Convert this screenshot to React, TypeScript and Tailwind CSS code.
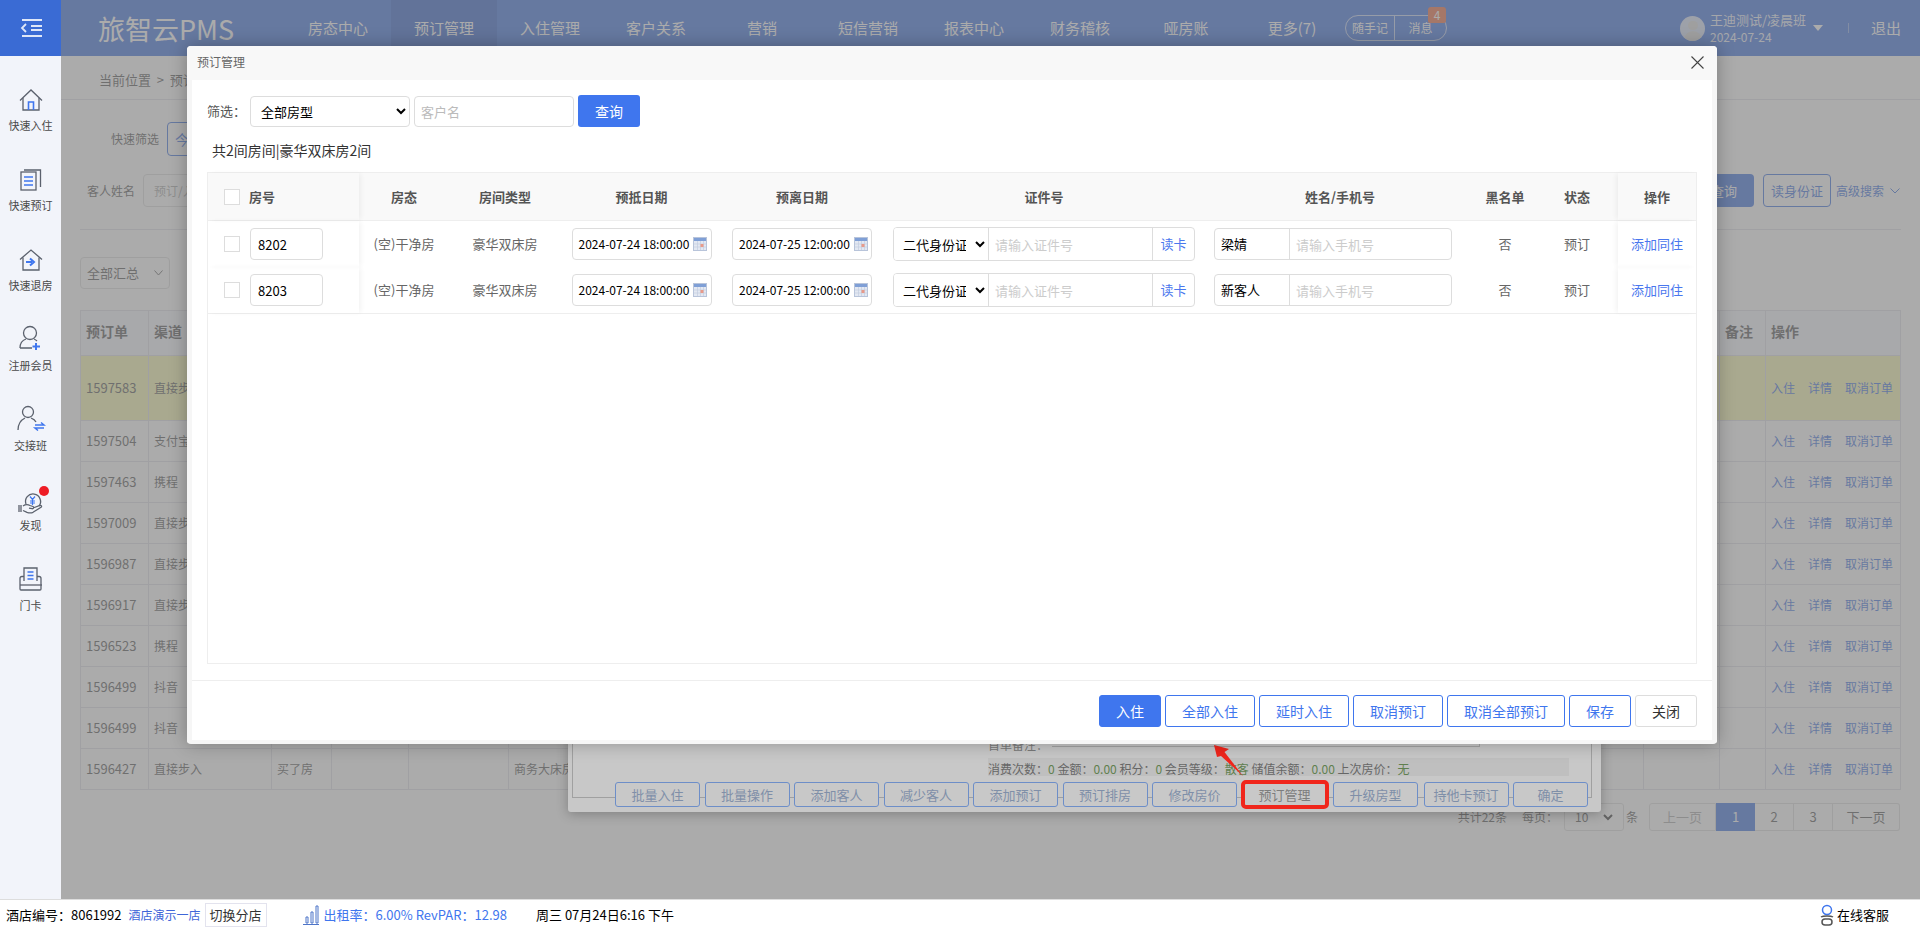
import React from 'react'

const roomCols = 'grid grid-cols-[151px_90px_112px_161px_160px_324px_268px_62px_82px_78px]'

const navItems = ['房态中心', '预订管理', '入住管理', '客户关系', '营销', '短信营销', '报表中心', '财务稽核', '哑房账', '更多(7)']

const orders = [
  { id: '1597583', channel: '直接步入', tall: true },
  { id: '1597504', channel: '支付宝' },
  { id: '1597463', channel: '携程' },
  { id: '1597009', channel: '直接步入' },
  { id: '1596987', channel: '直接步入' },
  { id: '1596917', channel: '直接步入' },
  { id: '1596523', channel: '携程' },
  { id: '1596499', channel: '抖音' },
  { id: '1596499', channel: '抖音' },
  { id: '1596427', channel: '直接步入', guest: '买了房', room: '商务大床房' },
]

const rooms = [
  { no: '8202', guest: '梁婧' },
  { no: '8203', guest: '新客人' },
]

const backButtons = ['批量入住', '批量操作', '添加客人', '减少客人', '添加预订', '预订排房', '修改房价']

const footerButtons = ['全部入住', '延时入住', '取消预订', '取消全部预订', '保存']

const backBtn = 'relative border border-[#6d8ec8] rounded-[3px] bg-[#c8c8c8] text-[#7f8fa8] text-[13px] flex items-center justify-center'

function HomeIcon() {
  return (
    <svg width="24" height="22" viewBox="0 0 24 22" fill="none" stroke="#5b616d" strokeWidth="1.3">
      <path d="M1 11.5 12 1l11 10.5" />
      <path d="M4 9v12h16V9" />
      <path d="M9.5 21v-8h5v8" stroke="#3f76ee" strokeWidth="1.6" />
    </svg>
  )
}

function BookIcon() {
  return (
    <svg width="22" height="22" viewBox="0 0 22 22" fill="none" stroke="#5b616d" strokeWidth="1.3">
      <rect x="1" y="3" width="15" height="18" />
      <path d="M4 1h16.5v17" />
      <path d="M4 8h9M4 12h9M4 16h9" stroke="#3f76ee" strokeWidth="1.6" />
    </svg>
  )
}

function CheckoutIcon() {
  return (
    <svg width="24" height="22" viewBox="0 0 24 22" fill="none" stroke="#5b616d" strokeWidth="1.3">
      <path d="M1 10.5 12 1l11 9.500" />
      <path d="M4 8.500V21h16V8.500" />
      <path d="M7 13h6M11 9.500l4 3.500-4 3.500" stroke="#3f76ee" strokeWidth="2" />
    </svg>
  )
}

function MemberIcon() {
  return (
    <svg width="24" height="26" viewBox="0 0 24 26" fill="none" stroke="#5b616d" strokeWidth="1.3">
      <circle cx="11" cy="8" r="6.500" />
      <path d="M1 23c0-5 3-8 6-9M15 14c1 .4 2 1 3 2M1 23h12" />
      <path d="M17 18v7M13.500 21.500h7.500" stroke="#3f76ee" strokeWidth="2" />
    </svg>
  )
}

function ShiftIcon() {
  return (
    <svg width="30" height="26" viewBox="0 0 30 26" fill="none" stroke="#5b616d" strokeWidth="1.3">
      <circle cx="12" cy="7" r="5.500" />
      <path d="M2 25c0-6 3-10 7-12M15 13c2 .8 4 2 5 4" />
      <path d="M19 20h9l-3-2.500M28 23h-9l3 2.500" stroke="#3f76ee" strokeWidth="1.500" />
    </svg>
  )
}

function DiscoverIcon() {
  return (
    <svg width="26" height="24" viewBox="0 0 26 24" fill="none" stroke="#5b616d" strokeWidth="1.300">
      <path d="M8 13a7.500 7.500 0 1 1 13 2" />
      <path d="M5 15c3-2 5-1.500 7-.5l3 1c1.500.8 .5 2.500-1 2.200l-3-.6M15 17l7-2.500c1.500-.3 2 1 1 1.800l-8 5c-2 1-4 .8-6 0l-4-1.800" />
      <path d="M1 14v7M3 14v7" />
      <path d="M12 5.500l2.500 3 2.500-3M14.500 8.500V14M12 10h5M12 12h5" stroke="#3f76ee" strokeWidth="1.200" />
    </svg>
  )
}

function CardIcon() {
  return (
    <svg width="24" height="24" viewBox="0 0 24 24" fill="none" stroke="#5b616d" strokeWidth="1.300">
      <path d="M5 14V1h13v13" />
      <path d="M5 9.500H3c-1.300 0-2 .8-2 2V22c0 .6.500 1 1 1h19c.6 0 1-.4 1-1V11.500c0-1.200-.7-2-2-2h-2" />
      <path d="M1 18h22" />
      <path d="M8.500 5h6M8.500 8.500h6M8.500 12h6" stroke="#3f76ee" strokeWidth="1.500" />
    </svg>
  )
}

function CalendarIcon() {
  return (
    <svg width="14" height="14" viewBox="0 0 14 14" className="shrink-0">
      <rect x="0.500" y="0.500" width="13" height="13" fill="#e3e8f2" stroke="#b8c4da" />
      <rect x="1" y="1" width="12" height="3" fill="#7f9fd6" />
      <path d="M1 7h12M1 10h12M4.500 4v9M7.500 4v9M10.500 4v9" stroke="#c3cde0" strokeWidth="0.700" />
      <rect x="7.500" y="7" width="3" height="3" fill="#e89a8a" />
    </svg>
  )
}

function SideItem({ icon, label, dot }: { icon: React.ReactNode; label: string; dot?: boolean }) {
  return (
    <div className="h-[80px] flex flex-col items-center">
      <div className="relative h-[33px] flex items-end justify-center">
        <div className={dot ? 'translate-y-[4px]' : ''}>{icon}</div>
        {dot && <span className="absolute top-[8px] right-[-5px] w-[10px] h-[10px] rounded-full bg-[#ee1c25]" />}
      </div>
      <span className="mt-[6px] text-[11px] leading-[16px] text-[#4a4a4a]">{label}</span>
    </div>
  )
}

function BackDialog() {
  return (
    <div className="absolute left-[507px] top-[300px] w-[1033px] h-[512px] bg-[#c8c8c8] rounded-b-[3px] shadow-[0_2px_12px_rgba(0,0,0,0.25)] flex flex-col justify-end">
      <div className="absolute left-[4px] right-[9px] top-0 h-[498px] border-x border-b border-[#a0a0a0]" />
      <div className="relative ml-[420px] h-[18px] flex text-[#7a7a7a] text-[12px] mb-[11px]">
        <span className="w-[64px] pt-[7px] leading-[18px] whitespace-nowrap">首单备注：</span>
        <div className="w-[428px] h-[18px] border-b border-r border-[#a5a5a5]" />
      </div>
      <div className="relative ml-[420px] w-[581px] h-[18px] bg-[#bfbfbf] pt-[2px] text-[12px] leading-[18px] text-[#666] whitespace-nowrap">
        消费次数：<span className="text-[#5f7f4f]">0</span> 金额：<span className="text-[#5f7f4f]">0.00</span> 积分：<span className="text-[#5f7f4f]">0</span> 会员等级：<span className="text-[#5f7f4f]">散客</span> 储值余额：<span className="text-[#5f7f4f]">0.00</span> 上次房价：<span className="text-[#5f7f4f]">无</span>
      </div>
      <div className="relative mt-[6px] mb-[5px] pl-[47px] h-[25px] flex gap-[4.500px]">
        {backButtons.map((b) => (
          <div key={b} className={`${backBtn} w-[85px]`}>
            {b}
          </div>
        ))}
        <div className="relative w-[88px] -my-[2px] -ml-[1px] border-[4px] border-[#f0261c] rounded-[5px] bg-[#c8c8c8] text-[#7d7d7d] text-[13px] flex items-center justify-center">预订管理</div>
        <div className={`${backBtn} w-[85px]`}>升级房型</div>
        <div className={`${backBtn} w-[85px] ml-[1px]`}>持他卡预订</div>
        <div className={`${backBtn} w-[75px]`}>确定</div>
      </div>
    </div>
  )
}

function RoomRow({ room }: { room: (typeof rooms)[number] }) {
  return (
    <div className={`${roomCols} h-[46px] items-center text-[13px] text-[#666]`}>
      <div className="h-full flex items-center pl-[16px] gap-[10px] shadow-[3px_0_5px_-1px_rgba(0,0,0,0.05)]">
        <div className="w-[16px] h-[16px] border border-[#ddd] bg-white" />
        <input readOnly value={room.no} className="w-[73px] h-[32px] border border-[#ddd] rounded-[4px] px-[7px] text-[13px] text-black outline-none" />
      </div>
      <div className="text-center">(空)干净房</div>
      <div className="text-center">豪华双床房</div>
      <div className="flex justify-center">
        <div className="w-[140px] h-[32px] border border-[#ddd] rounded-[4px] flex items-center pl-[6px] text-[12px] text-black gap-[4px] whitespace-nowrap">
          2024-07-24 18:00:00
          <CalendarIcon />
        </div>
      </div>
      <div className="flex justify-center">
        <div className="w-[140px] h-[32px] border border-[#ddd] rounded-[4px] flex items-center pl-[6px] text-[12px] text-black gap-[4px] whitespace-nowrap">
          2024-07-25 12:00:00
          <CalendarIcon />
        </div>
      </div>
      <div className="flex justify-center">
        <div className="w-[302px] h-[34px] border border-[#ddd] rounded-[4px] flex items-center overflow-hidden">
          <select className="w-[95px] h-full pl-[5px] pr-[6px] text-[13px] text-black border-r border-[#ddd] bg-white outline-none">
            <option>二代身份证</option>
          </select>
          <input readOnly placeholder="请输入证件号" className="w-[163px] h-full px-[6px] text-[13px] outline-none placeholder:text-[#ccc]" />
          <div className="flex-1 h-full border-l border-[#ddd] flex items-center justify-center text-[#4a77ee]">读卡</div>
        </div>
      </div>
      <div className="pl-[8px]">
        <div className="w-[238px] h-[32px] border border-[#ddd] rounded-[4px] flex items-center overflow-hidden">
          <div className="w-[75px] h-full border-r border-[#ddd] pl-[6px] flex items-center text-black">{room.guest}</div>
          <input readOnly placeholder="请输入手机号" className="flex-1 min-w-0 h-full px-[6px] text-[13px] outline-none placeholder:text-[#ccc]" />
        </div>
      </div>
      <div className="text-center">否</div>
      <div className="text-center">预订</div>
      <div className="h-full flex items-center justify-center text-[#4a77ee] shadow-[-3px_0_5px_-1px_rgba(0,0,0,0.05)]">添加同住</div>
    </div>
  )
}

function FrontDialog() {
  return (
    <div className="absolute left-[126px] top-[46px] w-[1530px] h-[698px] bg-white rounded-[4px] border-x-[5px] border-b-[4px] border-[#f6f6f6] shadow-[0_0_18px_rgba(0,0,0,0.28)] flex flex-col">
      <div className="-mx-[5px] h-[34px] pb-[2px] bg-[#f8f8f8] rounded-t-[4px] flex items-center justify-between pl-[10px] pr-[13px] text-[12px] text-[#666]">
        预订管理
        <svg width="13" height="13" viewBox="0 0 13 13" stroke="#444" strokeWidth="1.100">
          <path d="M.5.5l12 12M12.500.5l-12 12" />
        </svg>
      </div>
      <div className="mt-[15px] pl-[15px] flex items-center h-[32px] text-[13px] text-[#555]">
        <span className="w-[43px]">筛选：</span>
        <select className="w-[160px] h-[31px] border border-[#ddd] rounded-[4px] pl-[6px] text-[13px] text-black bg-white outline-none">
          <option>全部房型</option>
        </select>
        <input readOnly placeholder="客户名" className="ml-[4px] w-[160px] h-[31px] border border-[#ddd] rounded-[4px] px-[6px] text-[13px] outline-none placeholder:text-[#bbb]" />
        <button className="ml-[4px] w-[62px] h-[32px] rounded-[3px] bg-[#3f76ee] text-white text-[14px]">查询</button>
      </div>
      <div className="mt-[13px] pl-[20px] h-[20px] text-[14px] leading-[20px] text-[#333]">共2间房间|豪华双床房2间</div>
      <div className="mt-[12px] ml-[15px] w-[1490px] h-[492px] border border-[#eee]">
        <div className={`${roomCols} h-[48px] items-center bg-[#f9f9f9] border-b border-[#eee] text-[13px] font-bold text-[#555]`}>
          <div className="h-full flex items-center pl-[16px] gap-[9px] shadow-[3px_0_5px_-1px_rgba(0,0,0,0.05)]">
            <div className="w-[16px] h-[16px] border border-[#ddd] bg-white" />
            房号
          </div>
          <div className="text-center">房态</div>
          <div className="text-center">房间类型</div>
          <div className="text-center">预抵日期</div>
          <div className="text-center">预离日期</div>
          <div className="text-center">证件号</div>
          <div className="text-center">姓名/手机号</div>
          <div className="text-center">黑名单</div>
          <div className="text-center">状态</div>
          <div className="h-full flex items-center justify-center shadow-[-3px_0_5px_-1px_rgba(0,0,0,0.05)]">操作</div>
        </div>
        {rooms.map((r) => (
          <RoomRow key={r.no} room={r} />
        ))}
        <div className="border-t border-[#eee]" />
      </div>
      <div className="mt-[16px] border-t border-[#eee] pt-[14px] pr-[15px] flex justify-end gap-1">
        <button className="h-[32px] px-4 border border-[#3f76ee] rounded-[3px] bg-[#3f76ee] text-white text-[14px]">入住</button>
        {footerButtons.map((b) => (
          <button key={b} className="h-[32px] px-4 border border-[#3f76ee] rounded-[3px] bg-white text-[#3f76ee] text-[14px]">
            {b}
          </button>
        ))}
        <button className="h-[32px] px-4 border border-[#ddd] rounded-[3px] bg-white text-[#333] text-[14px]">关闭</button>
      </div>
    </div>
  )
}

function MainPage() {
  return (
    <div className="flex flex-col bg-white h-full">
      <div className="h-[56px] shrink-0 bg-[#3b6fe0] flex items-center text-white">
        <div className="ml-[37px] w-[187px] text-[27px] leading-none">旅智云PMS</div>
        <div className="flex h-full">
          {navItems.map((n, i) => (
            <div key={n} className={i === 1 ? 'w-[106px] flex items-center justify-center text-[15px] bg-[#2f60cc]' : 'w-[106px] flex items-center justify-center text-[15px]'}>
              {n}
            </div>
          ))}
        </div>
        <div className="relative w-[102px] h-[26px] border border-white/70 rounded-full flex items-center text-[12px]">
          <div className="w-[49px] h-full border-r border-white/70 flex items-center justify-center">随手记</div>
          <div className="flex-1 text-center">消息</div>
          <span className="absolute right-0 -top-[9px] w-[18px] h-[16px] rounded-t-[3px] rounded-b-[2px] bg-[#ed6b3f] text-[12px] leading-[16px] text-center">4</span>
        </div>
        <div className="ml-[233px] w-[25px] h-[25px] rounded-full bg-white/80 overflow-hidden flex flex-col items-center pt-[5px]">
          <span className="w-[10px] h-[10px] rounded-full bg-[#dcdcdc]" />
          <span className="w-[18px] h-[10px] rounded-t-full bg-[#dcdcdc] mt-[1px]" />
        </div>
        <div className="ml-[5px] w-[96px] leading-[17px]">
          <div className="text-[13px] whitespace-nowrap opacity-90">王迪测试/凌晨班</div>
          <div className="text-[12px] opacity-90">2024-07-24</div>
        </div>
        <span className="ml-[7px] w-0 h-0 border-x-[5px] border-x-transparent border-t-[6px] border-t-white" />
        <span className="ml-[25px] w-[1px] h-[10px] bg-white/40" />
        <span className="ml-[22px] text-[15px]">退出</span>
      </div>

      <div className="h-[44px] shrink-0 border-b border-[#dfe0e8] pl-[38px] pt-[4px] flex items-center text-[13px] text-[#555]">当前位置 &nbsp;&gt;&nbsp; 预订管理</div>

      <div className="mt-[22px] pl-[50px] h-[34px] flex items-center gap-[8px] text-[12px] text-[#555]">
        快速筛选
        <div className="w-[100px] h-full border border-[#3b6fe0] rounded-[4px] pl-[7px] flex items-center text-[14px] text-[#3b6fe0]">今日</div>
      </div>

      <div className="mt-[18px] pl-[26px] pr-[20px] h-[33px] flex items-center text-[12px] text-[#555]">
        <span className="w-[56px] text-[12px]">客人姓名</span>
        <div className="w-[200px] h-full border border-[#ddd] rounded-[4px] pl-[10px] flex items-center text-[#aaa]">预订/入住人</div>
        <button className="ml-auto w-[60px] h-full rounded-[4px] bg-[#3b6fe0] text-white text-[13px]">查询</button>
        <button className="ml-[9px] w-[68px] h-full border border-[#3b6fe0] rounded-[4px] text-[#3b6fe0] text-[13px]">读身份证</button>
        <span className="ml-[5px] text-[#3b6fe0]">高级搜索</span>
        <svg className="ml-[6px]" width="10" height="6" viewBox="0 0 10 6" fill="none" stroke="#3b6fe0">
          <path d="M.5.500 5 5l4.500-4.500" />
        </svg>
      </div>

      <div className="mt-[22px] mx-[19px] border-b border-[#dfe0e8]" />

      <div className="mt-[27px] ml-[19px] w-[90px] h-[32px] border border-[#ddd] rounded-[4px] flex items-center justify-between px-[6px] text-[13px] text-[#555]">
        全部汇总
        <svg width="9" height="6" viewBox="0 0 9 6" fill="none" stroke="#666">
          <path d="M.5.500 4.500 5l4-4.500" />
        </svg>
      </div>

      <table className="mt-[21px] ml-[19px] w-[1820px] table-fixed border-collapse text-[12px] text-[#555] shrink-0">
        <colgroup>
          <col className="w-[68px]" />
          <col className="w-[123px]" />
          <col className="w-[60px]" />
          <col className="w-[77px]" />
          <col className="w-[100px]" />
          <col className="w-[135px]" />
          <col className="w-[1000px]" />
          <col className="w-[76px]" />
          <col className="w-[46px]" />
          <col className="w-[135px]" />
        </colgroup>
        <thead>
          <tr className="h-[45px] bg-[#f6f8ff] text-left text-[14px] font-bold">
            <th className="border border-[#dfe0e8] pl-[5px] pb-[4px]">预订单</th>
            <th className="border border-[#dfe0e8] pl-[5px] pb-[4px]">渠道</th>
            <th className="border border-[#dfe0e8]" colSpan={5} />
            <th className="border border-[#dfe0e8]" />
            <th className="border border-[#dfe0e8] pl-[5px] pb-[4px] whitespace-nowrap">备注</th>
            <th className="border border-[#dfe0e8] pl-[5px] pb-[4px]">操作</th>
          </tr>
        </thead>
        <tbody>
          {orders.map((o, i) => (
            <tr key={i} className={o.tall ? 'h-[65px] bg-[#f9f9ae]' : 'h-[41px]'}>
              <td className="border border-[#dfe0e8] pl-[5px] text-[13px]">{o.id}</td>
              <td className="border border-[#dfe0e8] pl-[5px]">{o.channel}</td>
              <td className="border border-[#dfe0e8] pl-[5px]">{o.guest}</td>
              <td className="border border-[#dfe0e8]" />
              <td className="border border-[#dfe0e8]" />
              <td className="border border-[#dfe0e8] pl-[5px] whitespace-nowrap">{o.room}</td>
              <td className="border border-[#dfe0e8]" />
              <td className="border border-[#dfe0e8]" />
              <td className="border border-[#dfe0e8]" />
              <td className="border border-[#dfe0e8] pl-[5px] whitespace-nowrap text-[#3b6fe0]">
                <div className="flex gap-[13px]">
                  <span>入住</span>
                  <span>详情</span>
                  <span>取消订单</span>
                </div>
              </td>
            </tr>
          ))}
        </tbody>
      </table>

      <div className="mt-[13px] pr-[20px] h-[28px] flex justify-end items-center text-[12px] text-[#555]">
        <span>共计22条</span>
        <span className="ml-[15px]">每页：</span>
        <div className="ml-[6px] w-[60px] h-full border border-[#ddd] rounded-[3px] flex items-center justify-between px-[10px]">
          10
          <svg width="10" height="7" viewBox="0 0 10 7" fill="none" stroke="#333" strokeWidth="2">
            <path d="M1 1l4 4 4-4" />
          </svg>
        </div>
        <span className="ml-[2px]">条</span>
        <div className="ml-[11px] h-full flex text-[13px]">
          <div className="w-[67px] border border-[#ddd] rounded-l-[3px] flex items-center justify-center text-[#aaa]">上一页</div>
          <div className="w-[39px] bg-[#3b6fe0] text-white flex items-center justify-center">1</div>
          <div className="w-[39px] border-y border-r border-[#ddd] flex items-center justify-center">2</div>
          <div className="w-[39px] border-y border-r border-[#ddd] flex items-center justify-center">3</div>
          <div className="w-[67px] border-y border-r border-[#ddd] rounded-r-[3px] flex items-center justify-center">下一页</div>
        </div>
      </div>
    </div>
  )
}

export default function App() {
  return (
    <div className="w-[1920px] h-[929px] overflow-hidden flex flex-col bg-white [font-family:'Noto_Sans_CJK_SC',sans-serif]">
      <div className="flex h-[899px]">
        <aside className="w-[61px] shrink-0 bg-[#f2f4fa] flex flex-col">
          <div className="h-[56px] bg-[#3a6bd4] flex items-center justify-center">
            <svg width="22" height="18" viewBox="0 0 22 18" fill="none" stroke="#dfe7f8" strokeWidth="1.800">
              <path d="M2 1h20M11 7h11M11 11h11M2 17h20" />
              <path d="M6 5 2 9l4 4" />
            </svg>
          </div>
          <div className="pt-[22px]">
            <SideItem icon={<HomeIcon />} label="快速入住" />
            <SideItem icon={<BookIcon />} label="快速预订" />
            <SideItem icon={<CheckoutIcon />} label="快速退房" />
            <SideItem icon={<MemberIcon />} label="注册会员" />
            <SideItem icon={<ShiftIcon />} label="交接班" />
            <SideItem icon={<DiscoverIcon />} label="发现" dot />
            <SideItem icon={<CardIcon />} label="门卡" />
          </div>
        </aside>

        <main className="relative flex-1 overflow-hidden">
          <MainPage />
          <div className="absolute inset-0 bg-[#7e7e7e]/65" />
          <BackDialog />
          <svg className="absolute left-[1153px] top-[745px]" width="30" height="32" viewBox="0 0 30 32" fill="#f0261c">
            <path d="M0 0 15 4 10.500 7 29 31 7 11 3 12z" />
          </svg>
          <FrontDialog />
        </main>
      </div>

      <footer className="h-[30px] shrink-0 border-t border-[#ddd] bg-white flex items-center text-[13px] text-black">
        <span className="ml-[6px]">酒店编号：8061992</span>
        <span className="ml-[7px] text-[12px] text-[#3f66d8]">酒店演示一店</span>
        <span className="ml-[4px] h-[24px] w-[62px] border border-[#e3e3ee] flex items-center justify-center text-[#333]">切换分店</span>
        <svg className="ml-[36px]" width="17" height="20" viewBox="0 0 17 20" fill="none" stroke="#4d74c8">
          <path d="M0 19.500h16M3 18v-6h2v6zM8 18V7h2v11zM13 18V1h2v17z" />
        </svg>
        <span className="ml-[4px] text-[#3f76ee] whitespace-nowrap">出租率：6.00% RevPAR：12.98</span>
        <span className="ml-[29px] whitespace-nowrap">周三 07月24日6:16 下午</span>
        <svg className="ml-auto" width="16" height="22" viewBox="0 0 16 22" fill="none" stroke="#3f76ee" strokeWidth="1.500">
          <circle cx="8" cy="6" r="4.500" />
          <path d="M2 13c2-1.500 10-1.500 12 0" stroke="#555" />
          <rect x="3" y="15" width="10" height="6" rx="3" stroke="#555" />
        </svg>
        <span className="ml-[2px] mr-[31px] whitespace-nowrap">在线客服</span>
      </footer>
    </div>
  )
}
